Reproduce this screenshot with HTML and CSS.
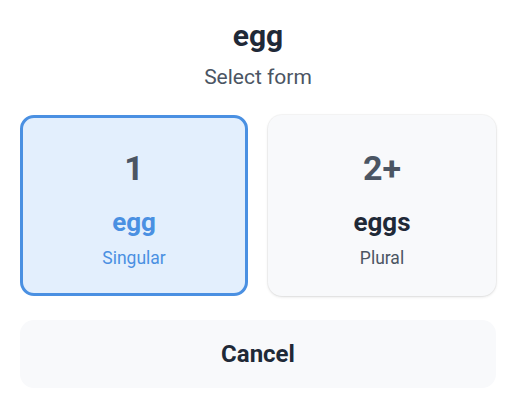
FILE: index.html
```html
<!DOCTYPE html>
<html lang="en">
<head>
<meta charset="utf-8">
<title>Select form</title>
<link rel="stylesheet" href="styles.css">
</head>
<body>
<div class="sheet">
  <h1 class="title">egg</h1>
  <p class="subtitle">Select form</p>
  <div class="options">
    <button class="option option--selected" type="button">
      <span class="option__count">1</span>
      <span class="option__word">egg</span>
      <span class="option__label">Singular</span>
    </button>
    <button class="option" type="button">
      <span class="option__count">2+</span>
      <span class="option__word">eggs</span>
      <span class="option__label">Plural</span>
    </button>
  </div>
  <button class="cancel" type="button">Cancel</button>
</div>
</body>
</html>
```

FILE: styles.css
```css
* { box-sizing: border-box; }
html, body { margin: 0; background: #ffffff; }
body {
  font-family: Roboto, "Noto Sans", "Liberation Sans", sans-serif;
  color: #1f2937;
}
.sheet {
  width: 476px;
  margin-left: 20px;
  padding-top: 18px;
  display: flex;
  flex-direction: column;
}
.title {
  margin: 0;
  font-size: 30px;
  line-height: 36px;
  font-weight: 700;
  text-align: center;
  color: #1f2937;
}
.subtitle {
  margin: 10px 0 0;
  font-size: 21px;
  line-height: 26px;
  text-align: center;
  color: #4b5563;
}
.options {
  margin-top: 25px;
  display: grid;
  grid-template-columns: 1fr 1fr;
  gap: 20px;
}
.option {
  font-family: inherit;
  display: flex;
  flex-direction: column;
  align-items: center;
  height: 181px;
  padding: 30px 0 0;
  border: 3px solid transparent;
  border-radius: 14px;
  background: #f8f9fb;
  box-shadow: 0 1px 3px rgba(0, 0, 0, 0.12), 0 0 0 1px rgba(0, 0, 0, 0.03);
  cursor: pointer;
}
.option--selected {
  border-color: #4a90e2;
  background: #e3effd;
  box-shadow: none;
}
.option__count {
  font-size: 34px;
  line-height: 40px;
  font-weight: 700;
  color: #4b5563;
}
.option__word {
  margin-top: 19px;
  font-size: 26px;
  line-height: 30px;
  font-weight: 700;
  color: #1f2937;
}
.option__label {
  margin-top: 11px;
  font-size: 17.5px;
  line-height: 20px;
  color: #4b5563;
}
.option--selected .option__word,
.option--selected .option__label {
  color: #4a90e2;
}
.cancel {
  margin-top: 24px;
  height: 68px;
  border: none;
  border-radius: 14px;
  background: #f8f9fb;
  font-family: inherit;
  font-size: 24px;
  font-weight: 700;
  color: #1f2937;
  cursor: pointer;
}
```
